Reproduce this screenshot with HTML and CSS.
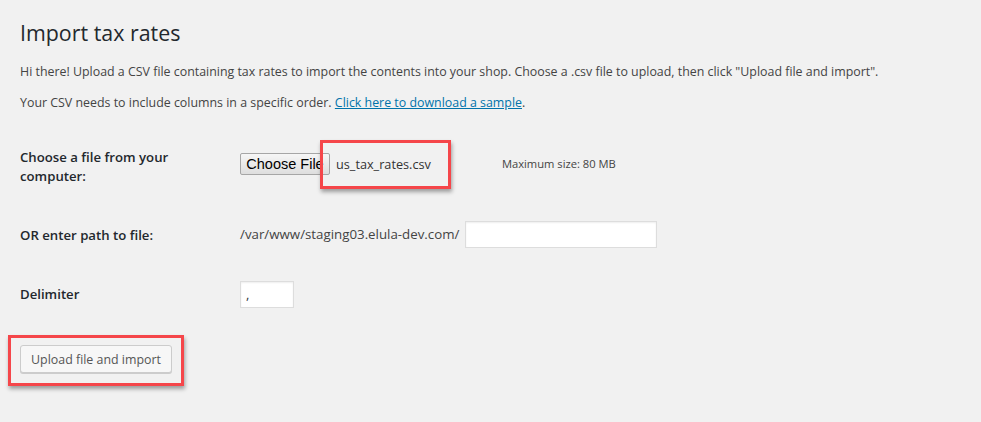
FILE: index.html
```html
<!DOCTYPE html>
<html lang="en">
<head>
  <meta charset="UTF-8" />
  <title>Import tax rates</title>
  <link rel="stylesheet" href="styles.css">
</head>
<body>

<div class="wrap">
  <h1>Import tax rates</h1>

  <p>Hi there! Upload a CSV file containing tax rates to import the contents into your shop. Choose a .csv file to upload, then click "Upload file and import".</p>
  <p>Your CSV needs to include columns in a specific order. <a href="#">Click here to download a sample</a>.</p>

  <form method="post" action="">
    <table class="form-table">
      <tr>
        <th>Choose a file from your computer:</th>
        <td class="file-cell">
          <div class="file-row">
            <span class="file-pick">
              <button type="button" class="file-btn">Choose File</button>
              <span class="file-name">us_tax_rates.csv</span>
              <span class="mark mark-file"></span>
            </span>
            <small class="max-size">Maximum size: 80 MB</small>
          </div>
        </td>
      </tr>
      <tr>
        <th>OR enter path to file:</th>
        <td>
          <span class="path">/var/www/staging03.elula-dev.com/</span>
          <input type="text" class="path-input" name="file_url" />
        </td>
      </tr>
      <tr>
        <th>Delimiter</th>
        <td><input type="text" class="delim-input" name="delimiter" value="," /></td>
      </tr>
    </table>

    <p class="submit">
      <span class="submit-wrap">
        <input type="submit" class="button" value="Upload file and import" />
        <span class="mark mark-submit"></span>
      </span>
    </p>
  </form>
</div>

</body>
</html>
```

FILE: styles.css
```css
html, body {
  margin: 0;
  background-color: #f1f1f1;
}
body {
  color: #444;
  font-family: "Open Sans", "Noto Sans", sans-serif;
  font-size: 12.4px;
  line-height: 18px;
}
.wrap {
  padding: 18px 20px 0;
}
h1 {
  margin: 0 0 16px;
  font-size: 21.4px;
  font-weight: 400;
  line-height: 29px;
  color: #23282d;
}
p {
  margin: 0 0 13px;
}
a {
  color: #0073aa;
}
.form-table {
  border-collapse: collapse;
  margin-top: 16px;
}
.form-table th {
  width: 200px;
  padding: 20px 10px 20px 0;
  text-align: left;
  vertical-align: top;
  font-size: 13.2px;
  font-weight: 600;
  line-height: 19px;
  color: #23282d;
}
.form-table td {
  padding: 15px 10px;
  vertical-align: middle;
}
.form-table td.file-cell {
  vertical-align: top;
  padding-top: 25px;
}
.file-row {
  display: flex;
  align-items: center;
}
.file-pick {
  position: relative;
  display: inline-flex;
  align-items: center;
}
.file-btn {
  width: 90px;
  height: 22px;
  padding: 0 5px;
  font-family: "Liberation Sans", Arial, sans-serif;
  font-size: 14.5px;
  color: #000;
  white-space: nowrap;
  overflow: hidden;
  background: linear-gradient(#f6f6f6, #dedede);
  border: 1px solid #a6a6a6;
  border-radius: 2px;
}
.file-name {
  margin-left: 6px;
  font-size: 12.7px;
  color: #333;
}
.max-size {
  margin-left: 71px;
  font-size: 11.2px;
  color: #444;
}
.path {
  font-size: 13.3px;
  color: #444;
}
input[type="text"] {
  height: 27px;
  box-sizing: border-box;
  padding: 3px 5px;
  font-family: inherit;
  font-size: 13px;
  color: #32373c;
  background-color: #fff;
  border: 1px solid #ddd;
  box-shadow: inset 0 1px 2px rgba(0, 0, 0, 0.07);
  vertical-align: middle;
}
.path-input {
  width: 192px;
  margin: -2px 0 0 2px;
}
.delim-input {
  width: 54px;
  margin-top: -1px;
}
.submit {
  margin: 21px 0 0;
  padding: 0 0 30px;
}
.submit-wrap {
  position: relative;
  display: inline-block;
}
.button {
  width: 152px;
  height: 28px;
  padding: 0 8px;
  font-family: inherit;
  font-size: 12.4px;
  color: #555;
  background-color: #f7f7f7;
  border: 1px solid #ccc;
  border-radius: 3px;
  box-shadow: 0 1px 0 #ccc;
  cursor: pointer;
}

/* red annotation boxes drawn over the form */
.mark {
  position: absolute;
  border: 3px solid #f5464a;
  box-shadow: 1px 3px 4px rgba(0, 0, 0, 0.35);
  pointer-events: none;
}
.mark-file {
  left: 80px;
  top: -13px;
  width: 125px;
  height: 43px;
}
.mark-submit {
  left: -12px;
  top: -10px;
  width: 170px;
  height: 45px;
}
```
